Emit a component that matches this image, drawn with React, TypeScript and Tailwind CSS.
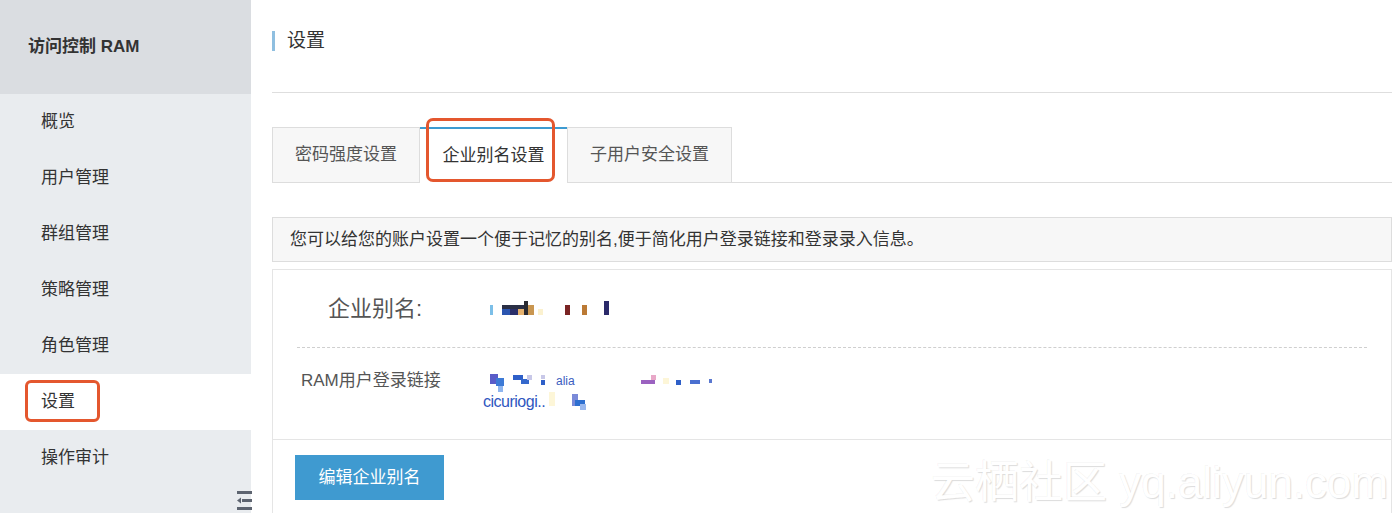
import React from "react";

const cjk = { fontFamily: '"Liberation Sans", "Noto Sans CJK SC", sans-serif' };

function AliasMosaic() {
  return (
    <svg width="130" height="20" viewBox="0 0 130 20" className="block">
      <rect x="0" y="6" width="3" height="10" fill="#7cbfe8" />
      <rect x="12" y="6" width="28" height="4" fill="#2a2f45" />
      <rect x="12" y="10" width="8" height="6" fill="#2b55b0" />
      <rect x="20" y="10" width="8" height="6" fill="#2a2f6a" />
      <rect x="28" y="10" width="6" height="6" fill="#e6b26e" />
      <rect x="34" y="2" width="4" height="14" fill="#2a2a30" />
      <rect x="38" y="6" width="6" height="10" fill="#c99650" />
      <rect x="48" y="10" width="5" height="6" fill="#fbf1cf" />
      <rect x="75" y="6" width="5" height="10" fill="#7a2424" />
      <rect x="92" y="6" width="5" height="10" fill="#bb7a35" />
      <rect x="114" y="2" width="5" height="14" fill="#2b2a6a" />
    </svg>
  );
}

function LinkMosaic() {
  return (
    <svg width="250" height="42" viewBox="0 0 250 42" className="block">
      <rect x="7" y="0" width="8" height="10" fill="#5a5cc8" />
      <rect x="13" y="4" width="8" height="8" fill="#3d7ad6" />
      <rect x="15" y="12" width="5" height="6" fill="#8fb6ef" />
      <rect x="30" y="1" width="10" height="5" fill="#2e5fc8" />
      <rect x="38" y="5" width="8" height="5" fill="#3468cc" />
      <rect x="44" y="1" width="5" height="5" fill="#c8c8e8" />
      <rect x="58" y="1" width="4" height="4" fill="#c8c8e8" />
      <rect x="58" y="6" width="4" height="5" fill="#2e5fc8" />
      <text x="73" y="11" fontSize="12" fill="#3a5cc0" fontFamily="Liberation Sans, sans-serif">alia</text>
      <rect x="158" y="6" width="14" height="4" fill="#9b62c0" />
      <rect x="168" y="1" width="5" height="5" fill="#e8a8c8" />
      <rect x="180" y="4" width="6" height="6" fill="#fdf6d8" />
      <rect x="193" y="6" width="5" height="5" fill="#2e5fc8" />
      <rect x="207" y="6" width="10" height="4" fill="#4a6fd0" />
      <rect x="226" y="5" width="3" height="4" fill="#5a78d0" />
      <text x="0" y="33" fontSize="16" fill="#2f57c0" letterSpacing="-0.5" fontFamily="Liberation Sans, sans-serif">cicuriogi..</text>
      <rect x="66" y="18" width="6" height="14" fill="#fdf6d8" />
      <rect x="89" y="20" width="6" height="12" fill="#7a8ad8" />
      <rect x="92" y="26" width="10" height="6" fill="#2e6fd0" />
      <rect x="97" y="30" width="6" height="6" fill="#9ab8ee" />
    </svg>
  );
}

export default function App() {
  const menu = ["概览", "用户管理", "群组管理", "策略管理", "角色管理", "设置", "操作审计"];
  return (
    <div className="flex h-[513px] w-[1400px] overflow-hidden bg-white text-[#333]" style={cjk}>
      {/* Sidebar */}
      <aside className="relative flex h-full w-[251px] shrink-0 flex-col bg-[#e9ecef]">
        <div className="flex h-[94px] items-center bg-[#dadde1] pl-[28px] text-[17px] font-bold text-[#333]">
          访问控制 RAM
        </div>
        <ul className="flex flex-col">
          {menu.map((m) => (
            <li
              key={m}
              className={`flex h-[56px] items-center pl-[41px] text-[17px] text-[#333] ${m === "设置" ? "bg-white" : ""}`}
            >
              {m}
            </li>
          ))}
        </ul>
        <div className="absolute left-[25px] top-[380px] h-[42px] w-[75px] rounded-[6px] border-[3px] border-[#e4572e]" />
        <svg className="absolute left-[236px] top-[489px]" width="16" height="24" viewBox="0 0 16 24">
          <rect x="1" y="2" width="15" height="3" fill="#5d6470" />
          <rect x="6" y="10" width="10" height="3" fill="#5d6470" />
          <path d="M1 11.5 L5 8.5 L5 14.5 Z" fill="#5d6470" />
          <rect x="1" y="18" width="15" height="3" fill="#5d6470" />
        </svg>
      </aside>

      {/* Main */}
      <main className="relative flex-1 pl-[21px] pr-[8px]">
        <div className="flex h-[93px] items-start border-b border-[#dedede] pt-[30px]">
          <div className="flex items-center">
            <span className="h-[20px] w-[3px] bg-[#8fbfe0]" />
            <span className="ml-[12px] text-[19px] leading-[22px] text-[#333]">设置</span>
          </div>
        </div>

        {/* Tabs */}
        <div className="relative mt-[34px] flex h-[56px] border-b border-[#dddddd]">
          <div className="flex h-[56px] w-[148px] items-center justify-center border border-[#dddddd] bg-[#f7f7f7] text-[17px] text-[#555]">
            密码强度设置
          </div>
          <div className="-mb-px flex h-[56px] w-[147px] items-center justify-center border-t-[2px] border-t-[#3d9bd1] bg-white text-[17px] text-[#333]">
            企业别名设置
          </div>
          <div className="flex h-[56px] w-[165px] items-center justify-center border border-[#dddddd] bg-[#f7f7f7] text-[17px] text-[#555]">
            子用户安全设置
          </div>
          <div className="absolute left-[154px] top-[-9px] h-[64px] w-[129px] rounded-[7px] border-[3px] border-[#e4572e]" />
        </div>

        {/* Info */}
        <div className="mt-[34px] flex h-[45px] items-center border border-[#dddddd] bg-[#f7f7f7] pl-[17px] text-[17px] text-[#333]">
          您可以给您的账户设置一个便于记忆的别名,便于简化用户登录链接和登录录入信息。
        </div>

        {/* Card */}
        <div className="mt-[7px] h-[260px] border border-[#e5e5e5]">
          <div className="flex h-[77px] items-center pl-[55px]">
            <span className="w-[162px] text-[22px] text-[#555]">企业别名:</span>
            <AliasMosaic />
          </div>
          <div className="mx-[24px] border-t border-dashed border-[#cfcfcf]" />
          <div className="flex h-[91px] items-start pl-[28px] pt-[22px]">
            <span className="w-[182px] text-[17px] leading-[22px] text-[#555]">RAM用户登录链接</span>
            <div className="mt-[4px]">
              <LinkMosaic />
            </div>
          </div>
          <div className="border-t border-[#e5e5e5] pl-[22px] pt-[15px]">
            <button className="flex h-[45px] w-[149px] items-center justify-center bg-[#3f9ad0] text-[17px] text-white">
              编辑企业别名
            </button>
          </div>
        </div>

        {/* Watermark */}
        <div
          className="pointer-events-none absolute left-[680px] top-[458px] whitespace-nowrap text-[44px] leading-[50px] text-white"
          style={{ textShadow: "1px 1px 1px rgba(0,0,0,0.14), -1px -1px 0 rgba(0,0,0,0.04)", fontFamily: '"Liberation Sans", "Noto Sans CJK SC", sans-serif' }}
        >
          云栖社区 yq.aliyun.com
        </div>
      </main>
    </div>
  );
}
